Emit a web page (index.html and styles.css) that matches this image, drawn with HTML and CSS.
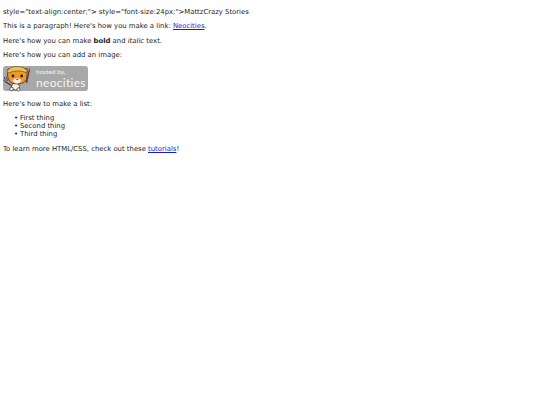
FILE: index.html
```html
<!DOCTYPE html>
<html lang="en">
<head>
    <meta charset="UTF-8">
    <title>MattzCrazy Stories</title>
    <link rel="stylesheet" href="styles.css">
</head>
<body>
    <p>style="text-align:center;"&gt; style="font-size:24px;"&gt;MattzCrazy Stories</p>
    <p>This is a paragraph! Here's how you make a link: <a href="#">Neocities</a>.</p>
    <p>Here's how you can make <strong>bold</strong> and <em>italic</em> text.</p>
    <p>Here's how you can add an image:</p>
    <div class="badge">
        <svg class="cat" viewBox="0 0 32 26" width="32" height="26">
            <!-- paintbrush -->
            <path d="M26 5 L23.5 17" stroke="#6b3a2a" stroke-width="1.4" fill="none"/>
            <path d="M26.8 1 L25 5.5 L27.2 6 Z" fill="#b23a2c"/>
            <!-- fork and arm -->
            <path d="M3 16 L9 20" stroke="#3a3a3a" stroke-width="1.2" fill="none"/>
            <path d="M1 11 L3.5 16 M3 10.5 L4.8 15 M0.5 14 L2.8 16.5" stroke="#3a3a3a" stroke-width="0.8" fill="none"/>
            <!-- body and feet -->
            <ellipse cx="12.5" cy="20.5" rx="4" ry="3.5" fill="#f6f3ea" stroke="#333" stroke-width="0.8"/>
            <circle cx="8.5" cy="23" r="1.8" fill="#f6f3ea" stroke="#333" stroke-width="0.7"/>
            <circle cx="15.5" cy="23.5" r="1.6" fill="#f6f3ea" stroke="#333" stroke-width="0.7"/>
            <path d="M20 15 L23.5 14" stroke="#333" stroke-width="1.2" fill="none"/>
            <!-- head -->
            <path d="M4.5 9 L5 3 L10 3 Q14 1 18 3 L24 2.5 L24 10 Q24 18 14 18 Q5 18 4.5 9 Z" fill="#f0982c" stroke="#333" stroke-width="0.8"/>
            <path d="M9.5 14 Q14 10.5 18.5 14 Q17 17.5 14 17.5 Q11 17.5 9.5 14 Z" fill="#fbeed5"/>
            <!-- hard hat -->
            <path d="M4 5.5 Q7 0 14 0.5 Q21 0.5 24.5 5 L23 6.5 Q14 3 5.5 7 Z" fill="#ecc24a" stroke="#333" stroke-width="0.5"/>
            <circle cx="10" cy="10" r="1.4" fill="#222"/>
            <circle cx="18.7" cy="10" r="1.4" fill="#222"/>
            <path d="M13 13 L15.5 13 L14.2 14.3 Z" fill="#5b2a1c"/>
        </svg>
        <div class="badge-text">
            <span class="hosted">hosted by,</span>
            <span class="neocities">neocities</span>
        </div>
    </div>
    <p>Here's how to make a list:</p>
    <ul>
        <li>First thing</li>
        <li>Second thing</li>
        <li>Third thing</li>
    </ul>
    <p>To learn more HTML/CSS, check out these <a href="#">tutorials</a>!</p>
</body>
</html>
```

FILE: styles.css
```css
html, body {
    background: white;
}

body {
    margin: 0 3px;
    padding-top: 1px;
    font-family: "DejaVu Sans", sans-serif;
    font-size: 6.86px;
    line-height: 8px;
    color: #1c1c1c;
}

p {
    margin: 6.6px 0;
}

a {
    color: #1a1ad8;
}

ul {
    margin: 6.6px 0;
    padding-left: 11px;
    list-style: none;
}

li::before {
    content: "•";
    display: inline-block;
    width: 6px;
}

.badge {
    display: flex;
    align-items: center;
    width: 85px;
    height: 25px;
    margin-bottom: 8.6px;
    background: #a8a8a8;
    border-radius: 3px;
}

.cat {
    flex-shrink: 0;
    align-self: flex-start;
}

.badge-text {
    display: flex;
    flex-direction: column;
    margin-left: 1px;
    padding-top: 2px;
    color: #f4f4f4;
    font-family: Lato, sans-serif;
}

.hosted {
    font-size: 6.5px;
    line-height: 8px;
}

.neocities {
    font-size: 12px;
    line-height: 14.4px;
    letter-spacing: 0.3px;
}
```
